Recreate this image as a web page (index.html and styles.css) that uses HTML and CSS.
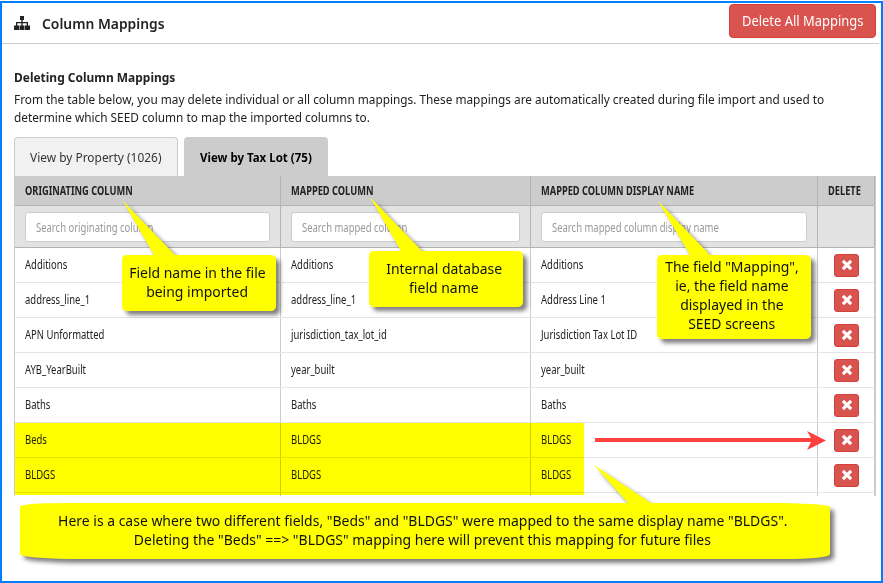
FILE: index.html
```html
<!DOCTYPE html>
<html lang="en">
<head>
<meta charset="utf-8">
<title>Column Mappings</title>
<link rel="stylesheet" href="styles.css">
</head>
<body>
<svg class="defs" aria-hidden="true">
  <symbol id="cross" viewBox="0 0 12 12"><path d="M3 .8 6 3.800 9 .8 11.200 3 8.200 6 11.200 9 9 11.200 6 8.200 3 11.200 .8 9 3.800 6 .8 3Z"/></symbol>
</svg>
<main class="frame">
  <header class="page-header">
    <svg class="sitemap" viewBox="0 0 16 14"><path d="M6 0h4v4H8.700v2H14v3.500h2V14h-5V9.500h1.700V7.300H8.700V9.500h1.800V14h-5V9.500h1.800V7.300H3.300V9.500H5V14H0V9.500h2V6h5.300V4H6z"/></svg>
    <h1><span class="t">Column Mappings</span></h1>
    <button class="delete-all"><span class="t">Delete All Mappings</span></button>
  </header>
  <section class="content">
    <h2><span class="t">Deleting Column Mappings</span></h2>
    <p class="intro"><span class="t">From the table below, you may delete individual or all column mappings. These mappings are automatically created during file import and used to</span><br><span class="t">determine which SEED column to map the imported columns to.</span></p>
    <nav class="tabs">
      <a class="tab first"><span class="t">View by Property (1026)</span></a>
      <a class="tab active"><span class="t">View by Tax Lot (75)</span></a>
    </nav>
    <div class="table">
      <div class="row head">
        <div><span class="t">ORIGINATING COLUMN</span></div><div><span class="t">MAPPED COLUMN</span></div><div><span class="t">MAPPED COLUMN DISPLAY NAME</span></div><div><span class="t">DELETE</span></div>
      </div>
      <div class="row filters">
        <div><label class="search"><span class="t">Search originating column</span></label></div><div><label class="search"><span class="t">Search mapped column</span></label></div><div><label class="search"><span class="t">Search mapped column display name</span></label></div><div></div>
      </div>
      <div class="row"><div><span class="t">Additions</span></div><div><span class="t">Additions</span></div><div><span class="t">Additions</span></div><div><button class="x"><svg><use href="#cross"/></svg></button></div></div>
      <div class="row"><div><span class="t">address_line_1</span></div><div><span class="t">address_line_1</span></div><div><span class="t">Address Line 1</span></div><div><button class="x"><svg><use href="#cross"/></svg></button></div></div>
      <div class="row"><div><span class="t">APN Unformatted</span></div><div><span class="t">jurisdiction_tax_lot_id</span></div><div><span class="t">Jurisdiction Tax Lot ID</span></div><div><button class="x"><svg><use href="#cross"/></svg></button></div></div>
      <div class="row"><div><span class="t">AYB_YearBuilt</span></div><div><span class="t">year_built</span></div><div><span class="t">year_built</span></div><div><button class="x"><svg><use href="#cross"/></svg></button></div></div>
      <div class="row"><div><span class="t">Baths</span></div><div><span class="t">Baths</span></div><div><span class="t">Baths</span></div><div><button class="x"><svg><use href="#cross"/></svg></button></div></div>
      <div class="row"><div><span class="t">Beds</span></div><div><span class="t">BLDGS</span></div><div><span class="t">BLDGS</span></div><div><button class="x"><svg><use href="#cross"/></svg></button></div></div>
      <div class="row"><div><span class="t">BLDGS</span></div><div><span class="t">BLDGS</span></div><div><span class="t">BLDGS</span></div><div><button class="x"><svg><use href="#cross"/></svg></button></div></div>
      <div class="row stub"><div></div><div></div><div></div><div></div></div>
    </div>
  </section>
</main>
<div class="highlight"></div>
<svg class="marks" viewBox="0 0 883 583">
  <g class="balloons">
    <path d="M123 201 175 255H270Q276 255 276 260V306Q276 311 270 311H127Q122 311 122 306V260Q122 255 127 255H154Z"/>
    <path d="M370 197 422 251H517Q523 251 523 256V302Q523 307 517 307H374Q369 307 369 302V256Q369 251 374 251H401Z"/>
    <path d="M658 201 710 255H805Q811 255 811 260V334Q811 339 805 339H662Q657 339 657 334V260Q657 255 662 255H690Z"/>
    <path d="M594 465 651 503H780Q830 504 830 507V554Q829 559 780 559H70Q21 558 20 554V507Q20 503 70 503H628Z"/>
  </g>
  <path class="arrow" d="M595 438H811L807 431 826 440.500 807 450 811 442H595Z"/>
</svg>
<div class="note one"><span class="t">Field name in the file</span><span class="t">being imported</span></div>
<div class="note two"><span class="t">Internal database</span><span class="t">field name</span></div>
<div class="note three"><span class="t">The field "Mapping",</span><span class="t">ie, the field name</span><span class="t">displayed in the</span><span class="t">SEED screens</span></div>
<div class="note four"><span class="t">Here is a case where two different fields, "Beds" and "BLDGS" were mapped to the same display name "BLDGS".</span><span class="t">Deleting the "Beds" ==&gt; "BLDGS" mapping here will prevent this mapping for future files</span></div>
</body>
</html>
```
FILE: styles.css
```css
* { box-sizing: border-box; }
body { margin: 0; padding-top: 1px; height: 583px; overflow: hidden; background: #fff; color: #222; font: 13px/18px "Noto Sans", sans-serif; position: relative; }
h1, h2, p { margin: 0; }
button { font: inherit; padding: 0; }
.defs { position: absolute; width: 0; height: 0; }
.t { display: inline-block; white-space: nowrap; transform-origin: left center; }
.frame { height: 582px; border: 2px solid #0080ff; overflow: hidden; }

.page-header { display: flex; align-items: center; height: 41px; margin-right: 2px; padding: 0 3px 0 12px; border-bottom: 1px solid #ccc; }
.sitemap { width: 16px; height: 14px; fill: #222; margin-right: 12px; }
h1 { font-size: 15px; font-weight: 600; line-height: 20px; flex: 1; }
h1 .t { transform: scaleX(.924); }
.delete-all { width: 147px; height: 34px; align-self: flex-start; margin-top: 1px; border: 1px solid #d43f3a; border-radius: 4px; background: #d9534f; color: #fff; font-size: 14px; }
.delete-all .t { transform: scaleX(.924); transform-origin: center; margin: 0 -20px; }

.content { padding: 23px 5px 0 12px; }
h2 { font-size: 13px; font-weight: 700; line-height: 20px; margin-bottom: 3px; }
h2 .t { transform: scaleX(.92); }
.intro { line-height: 18px; height: 36px; }
.intro .t { transform: scaleX(.909); }
.tabs { display: flex; gap: 6px; margin-top: 11px; height: 39px; }
.tab { width: 164px; padding: 10px 15px; border: 1px solid #ccc; border-bottom: 0; border-radius: 4px 4px 0 0; background: #f1f1f1; color: #333; }
.tab .t { transform: scaleX(.917); }
.tab.active { width: 144px; background: #ccc; color: #000; font-weight: 700; }
.tab.active .t { transform: scaleX(.885); }

.table { width: 862px; border-left: 1px solid #ccc; border-right: 2px solid #ccc; }
.row { display: grid; grid-template-columns: 266px 250px 287px 56px; height: 35px; border-bottom: 1px solid #e4e4e4; font-size: 12px; line-height: 34px; }
.row > div { padding: 0 10px; border-right: 1px solid #ccc; min-width: 0; }
.row > div:last-child { border: 0; }
.row .t { transform: scaleX(.79); }
.row.head { height: 30px; line-height: 29px; background: #ccc; border-color: #b3b3b3; font-weight: 700; }
.head > div, .filters > div { border-color: #b3b3b3; }
.head > div:last-child, .filters > div:last-child { border-right: 1px solid #b3b3b3; margin-right: -1px; }
.head .t { transform: scaleX(.772); }
.row.filters { height: 42px; background: #e2e2e2; border-color: #b3b3b3; }
.search { display: block; height: 30px; margin-top: 6px; padding-left: 10px; line-height: 29px; background: #fff; border: 1px solid #ccc; border-radius: 3px; color: #999; }
.row.stub { height: 3px; border: 0; }
.x { display: block; width: 25px; height: 23px; margin: 6px 0 0 6px; border: 1px solid #d43f3a; border-radius: 3px; background: #d9534f; }
.x svg { display: block; width: 12px; height: 12px; margin: -2px auto 0; fill: #fff; }

.highlight { position: absolute; left: 15px; top: 423px; width: 569px; height: 72px; background: #ff0; mix-blend-mode: multiply; }
.marks { position: absolute; left: 0; top: 0; width: 883px; height: 583px; }
.balloons { fill: #ff0; filter: drop-shadow(4px 4px 2px rgba(0, 0, 0, .5)); }
.arrow { fill: #ff4040; }
.note { position: absolute; display: flex; flex-direction: column; align-items: center; color: #111; font: 14px/19px "Noto Sans", sans-serif; }
.note .t { transform: scaleX(.997); transform-origin: center; }
.one { left: 120px; top: 263px; width: 154px; }
.two { left: 367px; top: 259px; width: 154px; }
.three { left: 655px; top: 257px; width: 154px; }
.four { left: 20px; top: 511px; width: 805px; }
```
